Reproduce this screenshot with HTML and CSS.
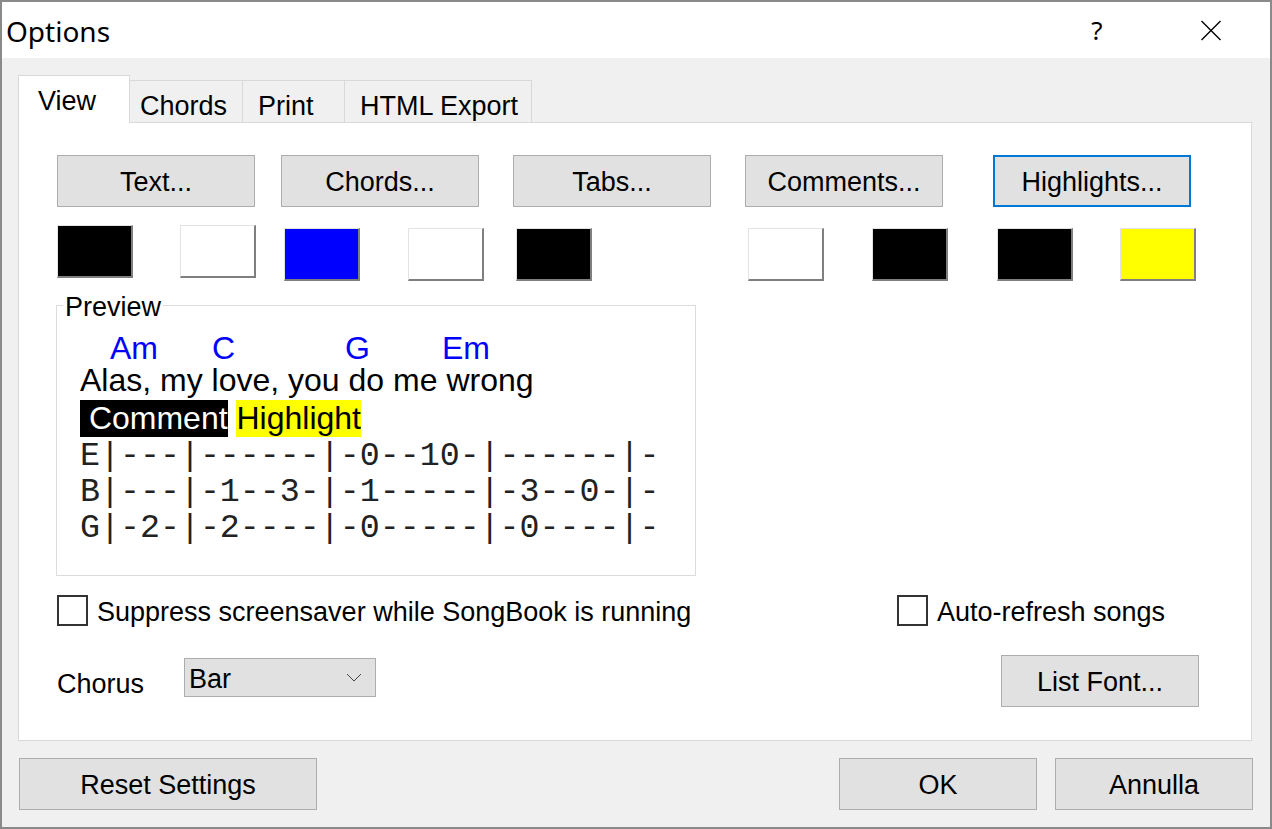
FILE: index.html
```html
<!DOCTYPE html>
<html>
<head>
<meta charset="utf-8">
<title>Options</title>
<link rel="stylesheet" href="styles.css">
</head>
<body>
<div class="window">
  <div class="titlebar">
    <span class="title">Options</span>
    <span class="help">?</span>
    <span class="close"><svg width="22" height="21" viewBox="0 0 22 21"><path d="M1.5 1L20.5 20M20.5 1L1.5 20" stroke="#000" stroke-width="1.4" fill="none"/></svg></span>
  </div>
  <div class="body">
    <div class="tabs">
      <div class="tab tab-view active">View</div>
      <div class="tab tab-chords">Chords</div>
      <div class="tab tab-print">Print</div>
      <div class="tab tab-html">HTML Export</div>
    </div>
    <div class="panel">
      <div class="btn-row">
        <button class="btn">Text...</button>
        <button class="btn">Chords...</button>
        <button class="btn">Tabs...</button>
        <button class="btn">Comments...</button>
        <button class="btn btn-focus">Highlights...</button>
      </div>
      <div class="swatch-row">
        <div class="swatch sw-black"></div>
        <div class="swatch sw-white"></div>
        <div class="swatch sw-blue"></div>
        <div class="swatch sw-white"></div>
        <div class="swatch sw-black"></div>
        <div class="swatch sw-white"></div>
        <div class="swatch sw-black"></div>
        <div class="swatch sw-black"></div>
        <div class="swatch sw-yellow"></div>
      </div>
      <div class="group">
        <div class="group-title">Preview</div>
        <div class="preview">
          <div class="chord-line"><span class="ch ch-am">Am</span><span class="ch ch-c">C</span><span class="ch ch-g">G</span><span class="ch ch-em">Em</span></div>
          <div class="lyric">Alas, my love, you do me wrong</div>
          <div class="marks"><span class="cmt"> Comment</span> <span class="hl">Highlight</span></div>
          <pre class="tab-lines">E|---|------|-0--10-|------|-
B|---|-1--3-|-1-----|-3--0-|-
G|-2-|-2----|-0-----|-0----|-</pre>
        </div>
      </div>
      <div class="check-row">
        <label class="check"><span class="box"></span><span class="check-label">Suppress screensaver while SongBook is running</span></label>
        <label class="check check-right"><span class="box"></span><span class="check-label">Auto-refresh songs</span></label>
      </div>
      <div class="chorus-row">
        <span class="chorus-label">Chorus</span>
        <div class="select"><span class="select-value">Bar</span><svg width="16" height="9" viewBox="0 0 16 9"><path d="M1 1L8 8L15 1" fill="none" stroke="#444" stroke-width="1"/></svg></div>
        <button class="btn btn-listfont">List Font...</button>
      </div>
    </div>
    <div class="footer">
      <button class="btn btn-reset">Reset Settings</button>
      <button class="btn btn-ok">OK</button>
      <button class="btn btn-cancel">Annulla</button>
    </div>
  </div>
</div>
</body>
</html>
```
FILE: styles.css
```css
* { box-sizing: border-box; }
html, body { margin: 0; padding: 0; }
body {
  width: 1272px;
  height: 829px;
  overflow: hidden;
  font-family: "Liberation Sans", Arial, sans-serif;
  font-size: 27px;
  color: #000;
  background: #fff;
}
.window {
  width: 1272px;
  height: 829px;
  border: 2px solid #8a8a8a;
  display: flex;
  flex-direction: column;
  background: #f0f0f0;
}
.titlebar {
  flex: none;
  height: 56px;
  background: #fff;
  display: flex;
  align-items: center;
  padding-left: 4px;
}
.title {
  font-family: "Noto Sans", sans-serif;
  font-size: 28px;
  line-height: 32px;
  padding-top: 2px;
}
.help {
  margin-left: auto;
  width: 46px;
  text-align: center;
  font-family: "Noto Sans", sans-serif;
  font-size: 26px;
  line-height: 32px;
}
.close {
  width: 46px;
  margin-left: 68px;
  margin-right: 36px;
  display: flex;
  justify-content: center;
}
.body {
  flex: 1;
  display: flex;
  flex-direction: column;
  padding: 17px 18px 17px 16px;
}
.tabs {
  flex: none;
  height: 47px;
  display: flex;
  align-items: flex-end;
}
.tab {
  height: 42px;
  border: 1px solid #d9d9d9;
  border-bottom: none;
  background: #f0f0f0;
  padding-top: 10px;
  line-height: 31px;
  margin-left: -1px;
  white-space: nowrap;
}
.tab.active {
  position: relative;
  z-index: 1;
  height: 48px;
  margin-bottom: -1px;
  background: #fff;
  margin-left: 0;
}
.tab-view { width: 112px; padding-left: 19px; }
.tab-chords { width: 114px; padding-left: 10px; }
.tab-print { width: 103px; padding-left: 15px; }
.tab-html { width: 188px; padding-left: 15px; }
.panel {
  flex: none;
  height: 619px;
  background: #fff;
  border: 1px solid #d9d9d9;
  padding: 32px 55px 0 38px;
  display: flex;
  flex-direction: column;
}
.btn {
  font-family: "Liberation Sans", Arial, sans-serif;
  font-size: 27px;
  line-height: 31px;
  color: #000;
  background: #e1e1e1;
  border: 1px solid #adadad;
  height: 52px;
  width: 198px;
  padding: 2px 0 0 0;
  margin: 0;
  text-align: center;
  flex: none;
}
.btn-focus { border: 2px solid #0078d7; }
.btn-row { display: flex; }
.btn-row .btn:nth-child(2) { margin-left: 26px; }
.btn-row .btn:nth-child(3) { margin-left: 34px; }
.btn-row .btn:nth-child(4) { margin-left: 34px; }
.btn-row .btn:nth-child(5) { margin-left: 50px; }
.swatch-row {
  display: flex;
  align-items: flex-start;
  margin-top: 18px;
}
.swatch {
  flex: none;
  width: 76px;
  height: 53px;
  border-style: solid;
  border-width: 1px 2px 2px 1px;
  border-color: #e3e3e3 #7f7f7f #7f7f7f #e3e3e3;
  margin-top: 3px;
}
.swatch:nth-child(1) { margin-top: 0; }
.swatch:nth-child(2) { margin-top: 0; margin-left: 47px; }
.swatch:nth-child(3) { margin-left: 28px; }
.swatch:nth-child(4) { margin-left: 48px; }
.swatch:nth-child(5) { margin-left: 32px; }
.swatch:nth-child(6) { margin-left: 156px; }
.swatch:nth-child(7) { margin-left: 48px; }
.swatch:nth-child(8) { margin-left: 49px; }
.swatch:nth-child(9) { margin-left: 47px; }
.sw-black { background: #000; }
.sw-white { background: #fff; }
.sw-blue { background: #0000ff; }
.sw-yellow { background: #ffff00; }
.group {
  flex: none;
  width: 640px;
  height: 271px;
  border: 1px solid #dcdcdc;
  margin: 24px 0 0 -1px;
}
.group-title {
  width: fit-content;
  margin: -14px 0 0 6px;
  padding: 0 2px;
  background: #fff;
  line-height: 31px;
}
.preview {
  margin-top: 10px;
  padding-left: 23px;
  font-size: 32px;
}
.chord-line {
  display: flex;
  line-height: 31px;
  color: #0000ff;
}
.ch-am { margin-left: 30px; }
.ch-c { margin-left: 54px; }
.ch-g { margin-left: 110px; }
.ch-em { margin-left: 72px; }
.lyric { line-height: 31px; padding-top: 1px; white-space: nowrap; }
.marks {
  margin-top: 3px;
  line-height: 38px;
  white-space: pre;
}
.cmt { background: #000; color: #fff; padding-bottom: 1px; }
.hl { background: #ffff00; color: #000; padding-bottom: 1px; }
.tab-lines {
  margin: 1px 0 0 0;
  font-family: "Liberation Mono", "Courier New", monospace;
  font-size: 33.3px;
  line-height: 36px;
  color: #222;
}
.check-row {
  display: flex;
  align-items: center;
  margin-top: 19px;
  height: 31px;
}
.check {
  display: flex;
  align-items: center;
}
.check-right { margin-left: auto; margin-right: 31px; }
.box {
  width: 31px;
  height: 31px;
  border: 2px solid #333;
  background: #fff;
  flex: none;
}
.check-label {
  margin-left: 9px;
  line-height: 31px;
  padding-top: 3px;
  white-space: nowrap;
}
.chorus-row {
  display: flex;
  align-items: flex-start;
  margin-top: 29px;
}
.chorus-label {
  margin-top: 14px;
  line-height: 31px;
}
.select {
  margin-left: 40px;
  margin-top: 3px;
  width: 192px;
  height: 39px;
  background: #e1e1e1;
  border: 1px solid #adadad;
  display: flex;
  align-items: center;
  justify-content: space-between;
  padding: 0 13px 0 4px;
}
.select-value { line-height: 31px; padding-top: 3px; }
.btn-listfont { margin-left: auto; margin-right: -3px; }
.footer {
  flex: none;
  display: flex;
  margin-top: 17px;
  height: 52px;
}
.btn-reset { width: 298px; margin-left: 1px; }
.btn-ok { margin-left: auto; }
.btn-cancel { margin-left: 18px; margin-right: -1px; }
```
